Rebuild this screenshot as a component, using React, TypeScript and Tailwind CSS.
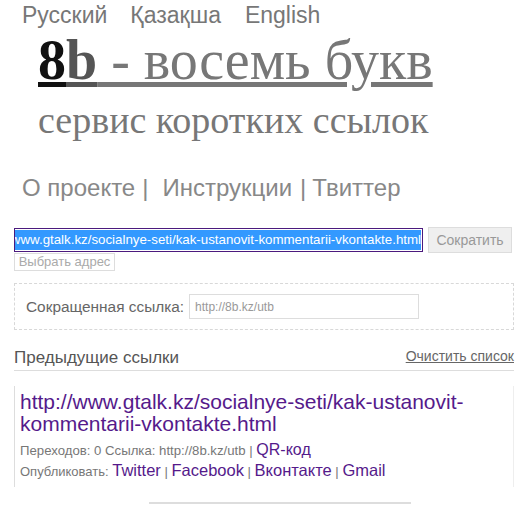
import React from "react";

export default function App() {
  const arial = { fontFamily: '"Liberation Sans", Arial, sans-serif' };
  const serif = { fontFamily: '"Liberation Serif", "Times New Roman", serif' };
  return (
    <div className="min-h-[505px] w-[526px] bg-white" style={arial}>
      <div className="ml-[14px] w-[500px]">
        {/* languages */}
        <div className="flex pl-[8px] text-[23px] leading-[30px] text-[#777]">
          <span>Русский</span>
          <span className="ml-[23px]">Қазақша</span>
          <span className="ml-[24px]">English</span>
        </div>

        {/* title */}
        <div className="pl-[24px] text-[56px] leading-[60px] whitespace-nowrap" style={serif}>
          <span className="font-bold text-[#111] underline decoration-[#111]">8</span>
          <span className="font-bold text-[#555] underline decoration-[#555]">b</span>
          <span className="text-[#777] underline decoration-[#777]"> - восемь букв</span>
        </div>
        <div
          className="mt-[5px] pl-[24px] text-[38px] leading-[50px] text-[#777] whitespace-nowrap"
          style={serif}
        >
          сервис коротких ссылок
        </div>

        {/* nav */}
        <div className="mt-[28px] flex pl-[8px] text-[24px] leading-[30px] text-[#888] whitespace-nowrap">
          <span>О проекте</span>
          <span className="ml-[7px]">|</span>
          <span className="ml-[14px]">Инструкции</span>
          <span className="ml-[8px]">|</span>
          <span className="ml-[6px]">Твиттер</span>
        </div>

        {/* url input */}
        <div className="mt-[24px] flex items-center">
          <div className="flex h-[24px] w-[409px] items-center justify-end overflow-hidden border border-[#4b1a7e] px-[1px]">
            <span className="whitespace-nowrap bg-[#3399ff] text-[13.3px] leading-[20px] text-white">
              http://www.gtalk.kz/socialnye-seti/kak-ustanovit-kommentarii-vkontakte.html
            </span>
          </div>
          <button className="ml-[5px] h-[26px] w-[84px] border border-[#ddd] bg-[#efefef] text-[14px] text-[#999]">
            Сократить
          </button>
        </div>
        <div className="flex">
          <button className="h-[18px] w-[101px] border border-[#ddd] bg-white text-[13px] leading-[16px] text-[#aaa]">
            Выбрать адрес
          </button>
        </div>

        {/* short link box */}
        <div className="mt-[12px] flex h-[47px] items-center border border-dashed border-[#d8d8d8] pl-[11px]">
          <span className="text-[15.4px] text-[#666]">Сокращенная ссылка:</span>
          <div className="ml-[5px] flex h-[25px] w-[230px] items-center border border-[#ddd] pl-[5px] text-[12px] text-[#999]">
            http://8b.kz/utb
          </div>
        </div>

        {/* previous links header */}
        <div className="mt-[16px] flex items-end justify-between border-b border-[#ddd] pb-[2px]">
          <span className="text-[17px] leading-[20px] text-[#555]">Предыдущие ссылки</span>
          <span className="mb-[2px] text-[14px] leading-[20px] text-[#666] underline">Очистить список</span>
        </div>

        {/* card */}
        <div className="mt-[15px] border-l border-r border-l-[#ddd] border-r-[#eee] pb-[6px] pl-[5px] pt-[5px]">
          <div className="text-[21px] leading-[22px] text-[#551a8b]">
            http://www.gtalk.kz/socialnye-seti/kak-ustanovit-
            <br />
            kommentarii-vkontakte.html
          </div>
          <div className="mt-[6px] text-[13.2px] leading-[18px] text-[#777]">
            Переходов: 0 Ссылка: http://8b.kz/utb |{" "}
            <span className="text-[16px] text-[#551a8b]">QR-код</span>
          </div>
          <div className="mt-[1px] text-[13px] leading-[18px] text-[#777]">
            Опубликовать: <span className="text-[16.5px] text-[#551a8b]">Twitter</span> |{" "}
            <span className="text-[16.5px] text-[#551a8b]">Facebook</span> |{" "}
            <span className="text-[16.5px] text-[#551a8b]">Вконтакте</span> |{" "}
            <span className="text-[16.5px] text-[#551a8b]">Gmail</span>
          </div>
        </div>

        <div className="ml-[135px] mt-[15px] h-[2px] w-[262px] bg-[#ddd]" />
      </div>
    </div>
  );
}
